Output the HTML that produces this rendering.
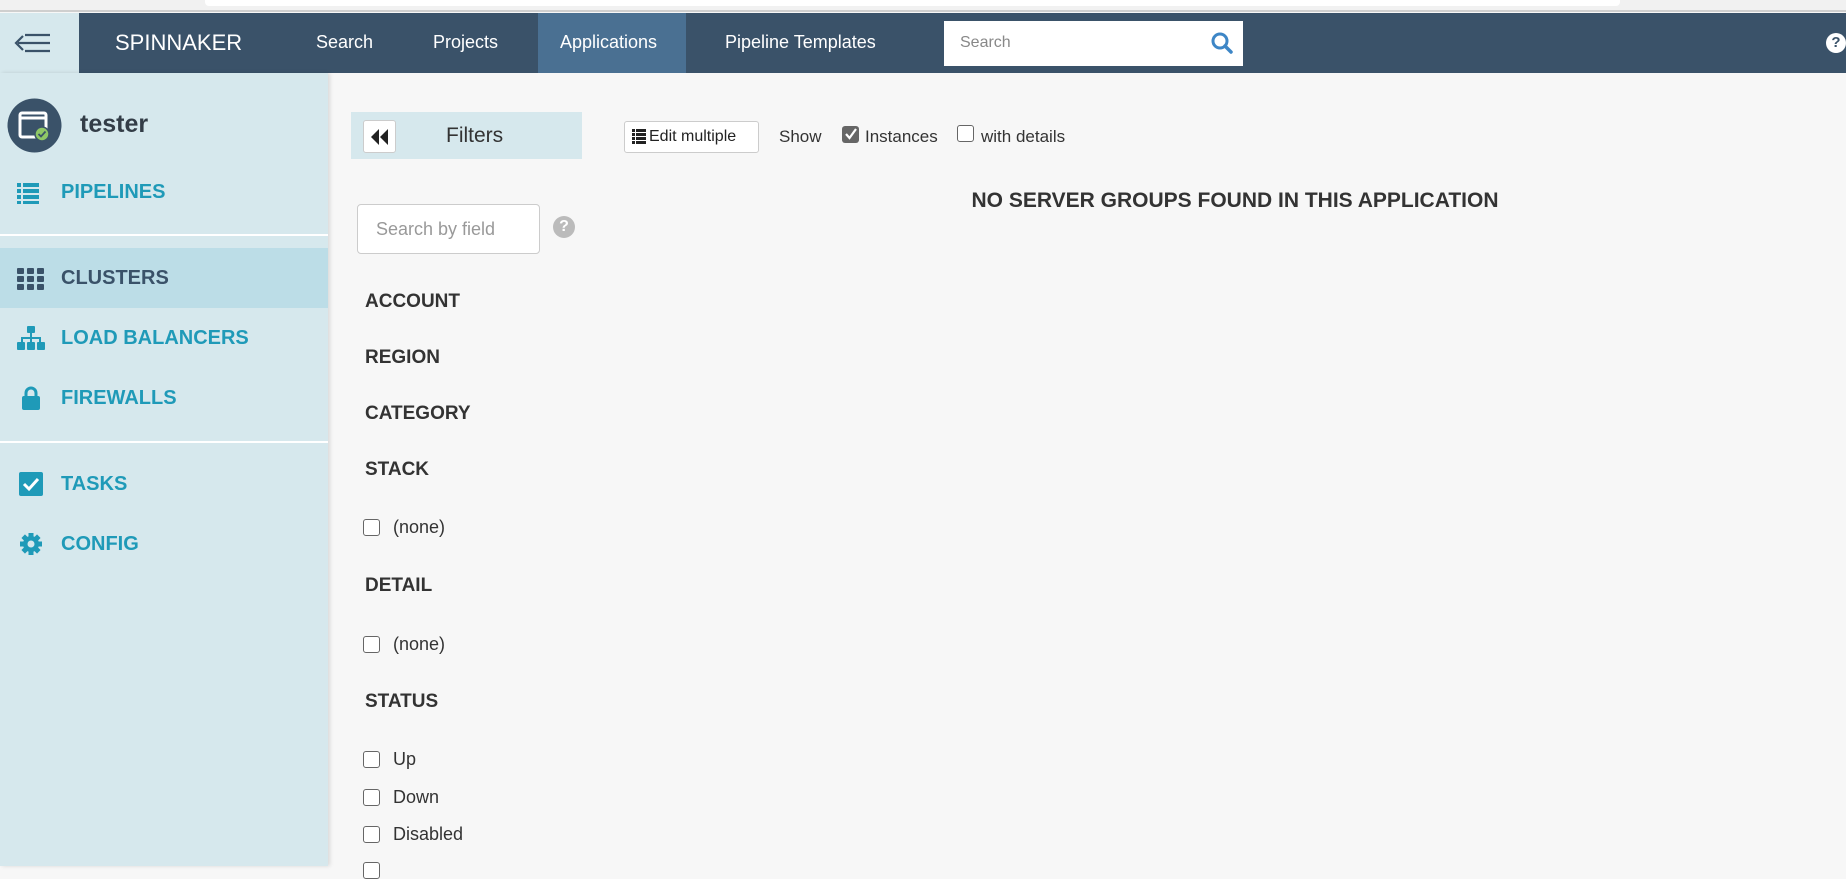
<!DOCTYPE html>
<html><head><meta charset="utf-8"><style>
*{box-sizing:border-box;margin:0;padding:0}
body{width:1846px;height:866px;overflow:hidden;background:#f7f7f7;font-family:"Liberation Sans",sans-serif;position:relative;color:#333}
.a{position:absolute;white-space:nowrap}
.top{left:0;top:0;width:1846px;height:12px;background:#f1f1f1;border-bottom:2px solid #cfcfcf}
.top i{position:absolute;left:205px;top:0;width:1415px;height:6px;background:#fff;border-radius:0 0 4px 4px}
.nav{left:0;top:13px;width:1846px;height:60px;background:#3a5269}
.ham{left:0;top:13px;width:79px;height:60px;background:#d6e8ed}
.nt{color:#fff;font-size:18px;top:32px}
.side{left:0;top:73px;width:328px;height:793px;background:#d6e8ed;box-shadow:2px 0 4px rgba(0,0,0,.12)}
.si{font-size:20px;font-weight:bold;color:#1f9ab8;left:61px}
.hd{font-size:19px;font-weight:bold;color:#333;left:365px}
.cb{width:17px;height:17px;border:1.5px solid #666;border-radius:3px;background:#fff}
.lb{font-size:18px;color:#333;left:393px}
</style></head><body>
<div class="a top"><i></i></div>
<div class="a nav"></div>
<div class="a ham"></div>
<svg class="a" style="left:13px;top:31px" width="40" height="24" viewBox="0 0 40 24"><g stroke="#3a5269" stroke-width="2.2" fill="none"><path d="M5 12H37M12 4H37M12 20H37M10 5L3 12L10 19"/></g></svg>
<div class="a nt" style="left:115px;top:30px;font-size:22px">SPINNAKER</div>
<div class="a nt" style="left:316px">Search</div>
<div class="a nt" style="left:433px">Projects</div>
<div class="a" style="left:538px;top:13px;width:148px;height:60px;background:#4a7092"></div>
<div class="a nt" style="left:560px">Applications</div>
<div class="a nt" style="left:725px">Pipeline Templates</div>
<div class="a" style="left:944px;top:21px;width:299px;height:45px;background:#fff"></div>
<div class="a" style="left:960px;top:34px;font-size:16px;color:#888">Search</div>
<svg class="a" style="left:1210px;top:31px" width="24" height="24" viewBox="0 0 24 24"><circle cx="10" cy="10" r="7" stroke="#3d86c6" stroke-width="3" fill="none"/><path d="M15 15L21 21" stroke="#3d86c6" stroke-width="3.5" stroke-linecap="round"/></svg>
<div class="a" style="left:1826px;top:33px;width:20px;height:20px;border-radius:50%;background:#fff;color:#3a5269;font-size:15px;font-weight:bold;text-align:center;line-height:20px">?</div>

<div class="a side"></div>
<svg class="a" style="left:7px;top:98px" width="55" height="55" viewBox="0 0 55 55"><circle cx="27.5" cy="27.5" r="27" fill="#3a5269"/><rect x="13" y="15" width="26" height="24" rx="2" fill="none" stroke="#fff" stroke-width="3"/><path d="M13 20H39" stroke="#fff" stroke-width="3"/><circle cx="35" cy="36" r="7" fill="#8fc766" stroke="#3a5269" stroke-width="1.5"/><path d="M31.5 36L34 38.5L38.5 33.5" stroke="#3a5269" stroke-width="1.8" fill="none"/></svg>
<div class="a" style="left:80px;top:110px;font-size:25px;font-weight:bold;color:#333d47">tester</div>
<svg class="a" style="left:17px;top:182px" width="22" height="22" viewBox="0 0 22 22" fill="#1f9ab8"><rect x="0" y="1" width="4" height="4"/><rect x="6" y="1" width="16" height="4"/><rect x="0" y="7" width="4" height="4"/><rect x="6" y="7" width="16" height="4"/><rect x="0" y="13" width="4" height="4"/><rect x="6" y="13" width="16" height="4"/><rect x="0" y="19" width="4" height="3"/><rect x="6" y="19" width="16" height="3"/></svg>
<div class="a si" style="top:181px">PIPELINES</div>
<div class="a" style="left:0;top:234px;width:328px;height:2px;background:#fff"></div>
<div class="a" style="left:0;top:248px;width:328px;height:60px;background:#bcdde7"></div>
<svg class="a" style="left:17px;top:268px" width="28" height="22" viewBox="0 0 28 22" fill="#3a5269"><rect x="0" y="0" width="7" height="6" rx="1"/><rect x="10" y="0" width="7" height="6" rx="1"/><rect x="20" y="0" width="7" height="6" rx="1"/><rect x="0" y="8" width="7" height="6" rx="1"/><rect x="10" y="8" width="7" height="6" rx="1"/><rect x="20" y="8" width="7" height="6" rx="1"/><rect x="0" y="16" width="7" height="6" rx="1"/><rect x="10" y="16" width="7" height="6" rx="1"/><rect x="20" y="16" width="7" height="6" rx="1"/></svg>
<div class="a si" style="top:267px;color:#3a5269">CLUSTERS</div>
<svg class="a" style="left:17px;top:326px" width="28" height="24" viewBox="0 0 28 24" fill="#1f9ab8"><rect x="10" y="0" width="8" height="7" rx="1"/><path d="M13 7h2v4h9v5h-2v-3h-7v3h-2v-3H6v3H4v-5h9z"/><rect x="0" y="16" width="8" height="8" rx="1"/><rect x="10" y="16" width="8" height="8" rx="1"/><rect x="20" y="16" width="8" height="8" rx="1"/></svg>
<div class="a si" style="top:327px">LOAD BALANCERS</div>
<svg class="a" style="left:21px;top:386px" width="20" height="24" viewBox="0 0 20 24" fill="#1f9ab8"><path d="M5 11V7a5 5 0 0110 0v4" stroke="#1f9ab8" stroke-width="3" fill="none"/><rect x="1" y="10" width="18" height="14" rx="2"/></svg>
<div class="a si" style="top:387px">FIREWALLS</div>
<div class="a" style="left:0;top:441px;width:328px;height:2px;background:#fff"></div>
<svg class="a" style="left:19px;top:472px" width="24" height="24" viewBox="0 0 24 24"><rect width="24" height="24" rx="2" fill="#1f9ab8"/><path d="M5 12L10 17L19 7" stroke="#fff" stroke-width="3" fill="none"/></svg>
<div class="a si" style="top:473px">TASKS</div>
<svg class="a" style="left:19px;top:532px" width="24" height="24" viewBox="0 0 24 24"><g fill="#1f9ab8"><circle cx="12" cy="12" r="8"/><g stroke="#1f9ab8" stroke-width="5"><path d="M12 1V23M1 12H23M4.2 4.2L19.8 19.8M19.8 4.2L4.2 19.8"/></g></g><circle cx="12" cy="12" r="3.5" fill="#d6e8ed"/></svg>
<div class="a si" style="top:533px">CONFIG</div>

<div class="a" style="left:351px;top:112px;width:231px;height:47px;background:#d6e8ed"></div>
<div class="a" style="left:363px;top:120px;width:33px;height:33px;background:#fff;border:1px solid #ccc;border-radius:3px"></div>
<svg class="a" style="left:370px;top:129px" width="20" height="16" viewBox="0 0 20 16" fill="#222"><path d="M9 0V16L1 8zM18 0V16L10 8z"/></svg>
<div class="a" style="left:446px;top:124px;font-size:21px;color:#333">Filters</div>
<div class="a" style="left:357px;top:204px;width:183px;height:50px;background:#fff;border:1px solid #ccc;border-radius:4px"></div>
<div class="a" style="left:376px;top:219px;font-size:18px;color:#999">Search by field</div>
<div class="a" style="left:553px;top:216px;width:22px;height:22px;border-radius:50%;background:#bbb;color:#fff;font-weight:bold;font-size:16px;text-align:center;line-height:22px">?</div>

<div class="a hd" style="top:291px">ACCOUNT</div>
<div class="a hd" style="top:347px">REGION</div>
<div class="a hd" style="top:403px">CATEGORY</div>
<div class="a hd" style="top:459px">STACK</div>
<div class="a cb" style="left:363px;top:519px"></div><div class="a lb" style="top:517px">(none)</div>
<div class="a hd" style="top:575px">DETAIL</div>
<div class="a cb" style="left:363px;top:636px"></div><div class="a lb" style="top:634px">(none)</div>
<div class="a hd" style="top:691px">STATUS</div>
<div class="a cb" style="left:363px;top:751px"></div><div class="a lb" style="top:749px">Up</div>
<div class="a cb" style="left:363px;top:789px"></div><div class="a lb" style="top:787px">Down</div>
<div class="a cb" style="left:363px;top:826px"></div><div class="a lb" style="top:824px">Disabled</div>
<div class="a cb" style="left:363px;top:862px"></div>

<div class="a" style="left:624px;top:121px;width:135px;height:32px;background:#fff;border:1px solid #ccc;border-radius:3px"></div>
<svg class="a" style="left:632px;top:129px" width="14" height="16" viewBox="0 0 14 16" fill="#222"><rect x="0" y="0" width="3" height="3"/><rect x="4" y="0" width="10" height="3"/><rect x="0" y="4" width="3" height="3"/><rect x="4" y="4" width="10" height="3"/><rect x="0" y="8" width="3" height="3"/><rect x="4" y="8" width="10" height="3"/><rect x="0" y="12" width="3" height="3"/><rect x="4" y="12" width="10" height="3"/></svg>
<div class="a" style="left:649px;top:128px;font-size:16px;color:#222">Edit multiple</div>
<div class="a" style="left:779px;top:127px;font-size:17px;color:#333">Show</div>
<div class="a" style="left:842px;top:126px;width:17px;height:17px;background:#666;border-radius:3px"></div>
<svg class="a" style="left:844px;top:127px" width="14" height="14" viewBox="0 0 14 14"><path d="M2 7L5.5 11L12 2" stroke="#fff" stroke-width="2.2" fill="none"/></svg>
<div class="a" style="left:865px;top:127px;font-size:17px;color:#333">Instances</div>
<div class="a cb" style="left:957px;top:125px"></div>
<div class="a" style="left:981px;top:127px;font-size:17px;color:#333">with details</div>
<div class="a" style="left:945px;top:189px;width:580px;text-align:center;font-size:21px;font-weight:bold;color:#333">NO SERVER GROUPS FOUND IN THIS APPLICATION</div>
</body></html>
